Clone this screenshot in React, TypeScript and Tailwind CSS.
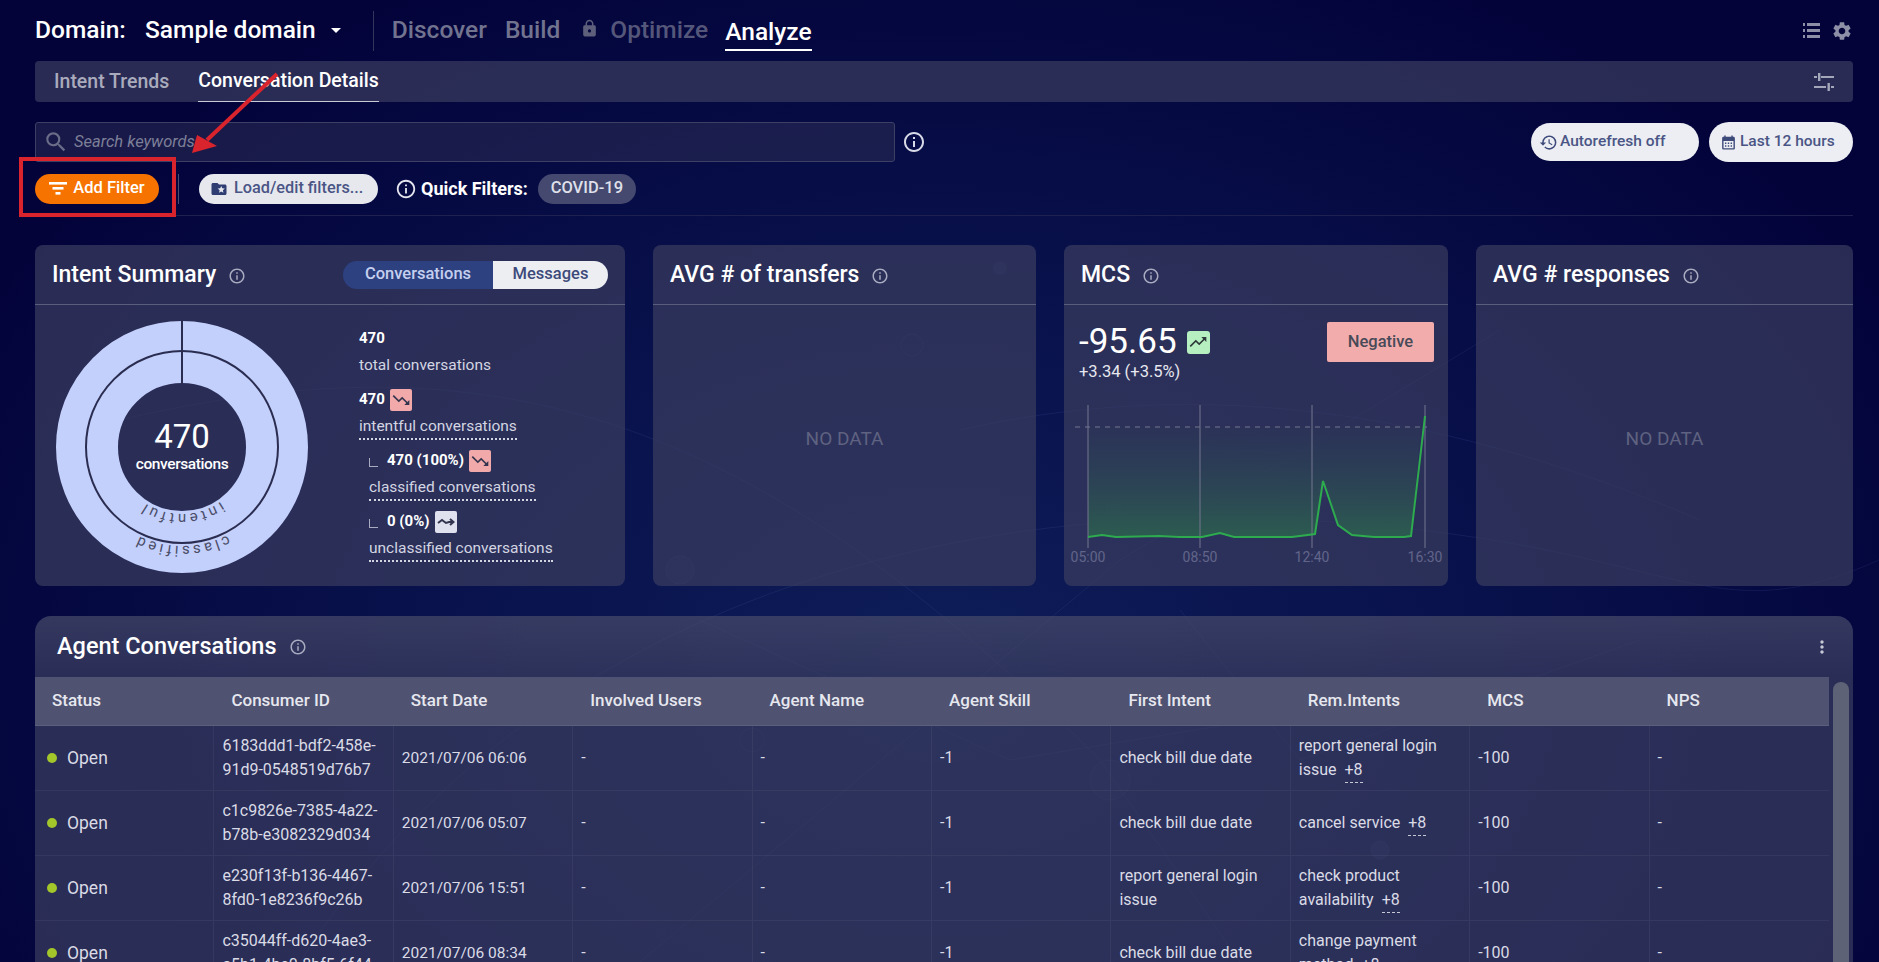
import React from 'react';
import {
  MdCalendarMonth,
  MdFolderSpecial,
  MdHistory,
  MdInfoOutline,
  MdLock,
  MdMoreVert,
  MdSearch,
  MdSettings,
  MdTrendingDown,
  MdTrendingUp,
} from 'react-icons/md';

const rows = [
  { id: ['6183ddd1-bdf2-458e-', '91d9-0548519d76b7'], date: '2021/07/06 06:06', first: ['check bill due date'], rem: ['report general login', 'issue'] },
  { id: ['c1c9826e-7385-4a22-', 'b78b-e3082329d034'], date: '2021/07/06 05:07', first: ['check bill due date'], rem: ['cancel service'] },
  { id: ['e230f13f-b136-4467-', '8fd0-1e8236f9c26b'], date: '2021/07/06 15:51', first: ['report general login', 'issue'], rem: ['check product', 'availability'] },
  { id: ['c35044ff-d620-4ae3-', 'a5b1-4bc0-8bf5-6f44'], date: '2021/07/06 08:34', first: ['check bill due date'], rem: ['change payment', 'method'] },
];

const columns = ['Status', 'Consumer ID', 'Start Date', 'Involved Users', 'Agent Name', 'Agent Skill', 'First Intent', 'Rem.Intents', 'MCS', 'NPS'];

const linePoints = '19,137 33,135 47,137 90,136 110,137 133,137 151,133 165,137 223,137 246,134 254,81 269,125 283,135 305,137 335,137 342,136 356,16';
const areaPoints = `19,27 ${linePoints.replace(' 356,16', ' 352,27')}`;

const Info: React.FC = () => <MdInfoOutline className="text-[#a9abc0] text-[18px]" />;

const CardHeader: React.FC<{ title: string; children?: React.ReactNode }> = ({ title, children }) => (
  <div className="h-[60px] flex items-center border-b border-[#5a5d7c] pl-[17px] pr-[17px] pt-[2px] shrink-0">
    <span className="text-white text-[23px] font-medium">{title}</span>
    <span className="ml-[12px]"><Info /></span>
    {children}
  </div>
);

const Badge: React.FC<{ tone: 'down' | 'flat' }> = ({ tone }) => (
  <span className={`w-[22px] h-[22px] rounded-[2px] flex items-center justify-center ${tone === 'down' ? 'bg-[#f2a9a9]' : 'bg-[#dfe1ee]'}`}>
    {tone === 'down' ? (
      <MdTrendingDown className="text-[#33354f] text-[20px]" />
    ) : (
      <svg width="18" height="12" viewBox="0 0 18 12" fill="none" stroke="#33354f" strokeWidth="2">
        <path d="M1 7 L5 4 L9 7 L12 6 H16" />
        <path d="M13 3 L16.5 6 L13 9" />
      </svg>
    )}
  </span>
);

const Stat: React.FC<{ value: string; label: string; tone?: 'down' | 'flat'; dashed?: boolean; nested?: boolean }> = ({ value, label, tone, dashed, nested }) => (
  <div className={`h-[61px] ${nested ? 'ml-[10px]' : ''}`}>
    <div className="h-[27px] flex items-center gap-[5px] text-white text-[15px] font-bold">
      {nested && <span className="w-[9px] h-[9px] mr-[4px] mt-[3px] border-l border-b border-[#a9abc0]" />}
      <span>{value}</span>
      {tone && <Badge tone={tone} />}
    </div>
    <div className="h-[27px] flex items-center text-[#d3d5e2] text-[15.5px]">
      <span className={dashed ? 'border-b-2 border-dotted border-[#d3d5e2] h-[27px] leading-[25px] pt-[1px]' : ''}>{label}</span>
    </div>
  </div>
);

const Donut: React.FC = () => (
  <svg width="254" height="254" viewBox="0 0 254 254" className="shrink-0">
    <defs>
      <path id="ringInner" d="M 127 60 A 67 67 0 1 1 126.99 60" />
      <path id="ringOuter" d="M 127 28 A 99 99 0 1 1 126.99 28" />
    </defs>
    <circle cx="127" cy="127" r="95" fill="none" stroke="#c3d0fb" strokeWidth="62" />
    <circle cx="127" cy="127" r="96" fill="none" stroke="#2a2c50" strokeWidth="2" />
    <line x1="127" y1="0" x2="127" y2="63" stroke="#2a2c50" strokeWidth="2" />
    <text className="fill-[#4b4d68] text-[15px]" letterSpacing="3" textAnchor="middle">
      <textPath href="#ringInner" startOffset="50%">intentful</textPath>
    </text>
    <text className="fill-[#4b4d68] text-[15px]" letterSpacing="3" textAnchor="middle">
      <textPath href="#ringOuter" startOffset="50%">classified</textPath>
    </text>
    <text x="127" y="128" textAnchor="middle" className="fill-white text-[33px]">470</text>
    <text x="127" y="149" textAnchor="middle" className="fill-white text-[15.5px] font-medium" letterSpacing="-0.4">conversations</text>
  </svg>
);

const Backdrop: React.FC = () => (
  <svg className="absolute inset-0 pointer-events-none" width="1879" height="962" viewBox="0 0 1879 962" fill="none" stroke="#5f7fc4" strokeOpacity="0.12">
    <path d="M300 962 C 520 620 920 500 1300 520 S 1700 640 1879 560" />
    <path d="M120 420 C 500 330 760 420 1100 760 L 1240 962" />
    <path d="M640 962 L 1120 560 L 1500 330" />
    <path d="M960 430 C 1180 380 1420 400 1700 520" />
    <path d="M1180 610 L 1300 760 L 1640 640" />
    <path d="M700 620 L 1010 760 L 1380 700" />
    <circle cx="912" cy="345" r="11" />
    <circle cx="752" cy="740" r="12" />
    <circle cx="1110" cy="780" r="20" fill="#5f7fc4" fillOpacity="0.04" />
    <circle cx="680" cy="570" r="14" fill="#5f7fc4" fillOpacity="0.05" />
    <circle cx="1000" cy="268" r="6" fill="#5f7fc4" fillOpacity="0.12" />
    <circle cx="1113" cy="510" r="8" fill="#5f7fc4" fillOpacity="0.12" />
    <circle cx="1325" cy="490" r="7" fill="#5f7fc4" fillOpacity="0.1" />
    <circle cx="1380" cy="850" r="9" fill="#5f7fc4" fillOpacity="0.1" />
  </svg>
);

const Annotations: React.FC = () => (
  <>
    <div className="absolute left-[19px] top-[157px] w-[157px] h-[60px] border-[4px] border-[#d9242e]" />
    <svg className="absolute left-[180px] top-[60px]" width="110" height="100" viewBox="0 0 110 100" fill="none">
      <line x1="97" y1="14" x2="27" y2="80" stroke="#d9242e" strokeWidth="4" />
      <polygon points="12,93 17,75 37,86" fill="#d9242e" />
    </svg>
  </>
);

const App: React.FC = () => {
  return (
    <div className="relative w-[1879px] h-[962px] overflow-hidden font-[Roboto,sans-serif] bg-[radial-gradient(ellipse_at_50%_70%,#0e1d58_0%,#08104a_45%,#03033a_82%)]">
      <Backdrop />
      <div className="relative pl-[35px] pr-[26px]">
        {/* top nav */}
        <div className="h-[61px] flex items-center text-[24.5px] font-medium">
          <span className="text-white w-[110px] shrink-0">Domain:</span>
          <span className="text-white">Sample domain</span>
          <span className="ml-[15px] w-0 h-0 border-l-[5px] border-r-[5px] border-t-[5px] border-l-transparent border-r-transparent border-t-white" />
          <span className="ml-[32px] w-px h-[40px] bg-[#33365c]" />
          <span className="ml-[18px] text-[#71738f]">Discover</span>
          <span className="ml-[18px] text-[#71738f]">Build</span>
          <MdLock className="ml-[20px] mb-[4px] text-[#5d5f7b] text-[19px]" />
          <span className="ml-[11px] text-[#55577a]">Optimize</span>
          <span className="ml-[17px] text-white h-[36px] leading-[34px] mt-[4px] border-b-2 border-white">Analyze</span>
          <div className="ml-auto flex items-center gap-[11px] text-[#8d8fa6]">
            <svg width="18" height="17" viewBox="0 0 18 17" fill="currentColor">
              <rect x="5" y="1" width="13" height="3" />
              <rect x="5" y="7" width="13" height="3" />
              <rect x="5" y="13" width="13" height="3" />
              <rect x="1" y="1" width="2" height="3" />
              <rect x="1" y="7" width="2" height="3" />
              <rect x="1" y="13" width="2" height="3" />
            </svg>
            <MdSettings className="text-[22px]" />
          </div>
        </div>

        {/* sub tabs */}
        <div className="h-[41px] bg-[#3a3d60]/70 rounded-[4px] flex items-stretch pl-[19px] pr-[19px] text-[19.5px] font-medium">
          <span className="flex items-center text-[#a9abbd]">Intent Trends</span>
          <span className="ml-[29px] flex items-center text-white border-b border-[#c9cad6]">Conversation Details</span>
          <svg className="ml-auto self-center text-[#a4a6ba]" width="20" height="18" viewBox="0 0 20 18" fill="currentColor">
            <rect x="7" y="3" width="13" height="2" />
            <rect x="0" y="3" width="3" height="2" />
            <rect x="4" y="0" width="2.4" height="8" />
            <rect x="0" y="13" width="12" height="2" />
            <rect x="17" y="13" width="3" height="2" />
            <rect x="13.5" y="10" width="2.4" height="8" />
          </svg>
        </div>

        {/* search row */}
        <div className="mt-[20px] h-[40px] flex items-center">
          <div className="w-[860px] h-[40px] bg-[#2e3055]/50 border border-[#3d3f64] rounded-[3px] flex items-center pl-[7px]">
            <MdSearch className="text-[#6a6c88] text-[26px]" />
            <span className="ml-[5px] italic text-[#7d7f98] text-[16.5px]">Search keywords</span>
          </div>
          <MdInfoOutline className="ml-[7px] text-[#d9dbe8] text-[24px]" />
          <button className="ml-auto w-[168px] h-[38px] rounded-full bg-[#eceef3] flex items-center pl-[8px] gap-[2px] text-[#4a5585] text-[15.5px] font-medium">
            <MdHistory className="text-[19px] text-[#3d4a7a]" />
            Autorefresh off
          </button>
          <button className="ml-[10px] w-[144px] h-[40px] rounded-full bg-[#eceef3] flex items-center pl-[11px] gap-[3px] text-[#4a5585] text-[15.5px] font-medium">
            <MdCalendarMonth className="text-[17px] text-[#3d4a7a]" />
            Last 12 hours
          </button>
        </div>

        {/* filter row */}
        <div className="mt-[11px] h-[31px] flex items-center">
          <button className="w-[124px] h-[30px] rounded-full bg-[#f67300] flex items-center justify-center gap-[6px] text-white text-[16.5px] font-medium">
            <svg width="18" height="13" viewBox="0 0 18 13" fill="currentColor">
              <rect x="0" y="0" width="18" height="2.6" />
              <rect x="3.5" y="5" width="11" height="2.6" />
              <rect x="6.5" y="10" width="5" height="2.6" />
            </svg>
            Add Filter
          </button>
          <span className="ml-[19px] w-px h-[30px] bg-[#4a4c70]" />
          <button className="ml-[20px] w-[179px] h-[30px] rounded-full bg-[#e6e8ee] flex items-center pl-[11px] gap-[6px] text-[#4a5585] text-[16.3px] font-medium whitespace-nowrap">
            <MdFolderSpecial className="text-[18px] text-[#2f3d73] shrink-0" />
            Load/edit filters...
          </button>
          <MdInfoOutline className="ml-[17px] text-[#e4e5ee] text-[22px]" />
          <span className="ml-[4px] text-white text-[18px] font-bold">Quick Filters:</span>
          <span className="ml-[10px] w-[98px] h-[30px] rounded-full bg-[#45496f] flex items-center justify-center text-[#dfe0ea] text-[16.5px] font-medium">COVID-19</span>
        </div>

        <div className="mt-[11px] h-px bg-[#1e2050]" />

        {/* summary cards */}
        <div className="mt-[29px] flex h-[341px] gap-[28px]">
          <div className="w-[590px] flex flex-col rounded-[8px] bg-[#3a3d60]/70">
            <CardHeader title="Intent Summary">
              <div className="ml-auto mr-0 -mt-[2px] flex h-[28px] rounded-full overflow-hidden text-[16.5px] font-medium">
                <span className="w-[150px] bg-[#2d4180] text-[#c5cfef] flex items-center justify-center">Conversations</span>
                <span className="w-[115px] bg-[#eceef2] text-[#3d4a7a] flex items-center justify-center">Messages</span>
              </div>
            </CardHeader>
            <div className="flex items-start pl-[20px]">
              <div className="mt-[15px]"><Donut /></div>
              <div className="mt-[20px] ml-[50px]">
                <Stat value="470" label="total conversations" />
                <Stat value="470" label="intentful conversations" tone="down" dashed />
                <Stat value="470 (100%)" label="classified conversations" tone="down" dashed nested />
                <Stat value="0 (0%)" label="unclassified conversations" tone="flat" dashed nested />
              </div>
            </div>
          </div>

          <div className="w-[383px] flex flex-col rounded-[8px] bg-[#3a3d60]/70">
            <CardHeader title="AVG # of transfers" />
            <div className="flex-1 flex items-center justify-center pb-[13px] text-[#5f6280] text-[19px]">NO DATA</div>
          </div>

          <div className="w-[384px] flex flex-col rounded-[8px] bg-[#3a3d60]/70">
            <CardHeader title="MCS" />
            <div className="pl-[15px] pr-[14px] pt-[17px]">
              <div className="h-[40px] flex items-center">
                <span className="text-white text-[35px]">-95.65</span>
                <span className="ml-[10px] w-[23px] h-[23px] rounded-[3px] bg-[#b6efc0] flex items-center justify-center">
                  <MdTrendingUp className="text-[#2c3a3a] text-[20px]" />
                </span>
                <span className="ml-auto w-[107px] h-[40px] rounded-[2px] bg-[#f2acac] flex items-center justify-center text-[#484a58] text-[16.5px] font-medium">Negative</span>
              </div>
              <div className="h-[20px] flex items-center text-[#e6e7ef] text-[16.5px]">+3.34 (+3.5%)</div>
              <svg className="-ml-[10px] mt-[18px] block" width="380" height="175" viewBox="0 0 380 175" fill="none">
                <defs>
                  <linearGradient id="mcsArea" x1="0" y1="0" x2="0" y2="1">
                    <stop offset="0" stopColor="#2b3556" stopOpacity="0.5" />
                    <stop offset="1" stopColor="#2c5c50" />
                  </linearGradient>
                </defs>
                <polygon points={areaPoints} fill="url(#mcsArea)" />
                {[19, 131, 243, 356].map((x) => (
                  <line key={x} x1={x} y1="5" x2={x} y2="148" stroke="#74778f" strokeWidth="1" />
                ))}
                <line x1="6" y1="27" x2="358" y2="27" stroke="#74778f" strokeDasharray="5 5" />
                <polyline points={linePoints} stroke="#2dab4e" strokeWidth="2" />
                {[[19, '05:00'], [131, '08:50'], [243, '12:40'], [356, '16:30']].map(([x, label]) => (
                  <text key={label} x={x} y="162" textAnchor="middle" className="fill-[#62658a] text-[14px]">{label}</text>
                ))}
              </svg>
            </div>
          </div>

          <div className="flex-1 flex flex-col rounded-[8px] bg-[#3a3d60]/70">
            <CardHeader title="AVG # responses" />
            <div className="flex-1 flex items-center justify-center pb-[13px] text-[#5f6280] text-[19px]">NO DATA</div>
          </div>
        </div>

        {/* agent conversations */}
        <div className="mt-[30px] h-[400px] rounded-t-[16px] bg-[#3a3d60]/70">
          <div className="h-[61px] flex items-center pl-[22px] pr-[21px] bg-gradient-to-b from-white/5 to-transparent rounded-t-[16px]">
            <span className="text-white text-[23.5px] font-medium">Agent Conversations</span>
            <span className="ml-[12px]"><Info /></span>
            <MdMoreVert className="ml-auto text-[#c6c8d6] text-[20px]" />
          </div>
          <div className="flex">
            <div className="w-[1794px]">
              <div className="h-[49px] grid grid-cols-10 bg-[#4f5270] border-b border-[#5c5f7c]">
                {columns.map((c) => (
                  <div key={c} className="flex items-center pl-[17px] text-[#e6e7ef] text-[17px] font-medium">{c}</div>
                ))}
              </div>
              {rows.map((r) => (
                <div key={r.id[0]} className="h-[65px] grid grid-cols-10 border-b border-white/5 text-[#dadbe6] text-[16px] leading-[24px]">
                  <div className="flex items-center pl-[12px] border-r border-white/5">
                    <span className="w-[10px] h-[10px] rounded-full bg-[#a3c62a]" />
                    <span className="ml-[10px] text-[17.5px]">Open</span>
                  </div>
                  <div className="flex flex-col justify-center pl-[8px] border-r border-white/5">
                    <div>{r.id[0]}</div>
                    <div>{r.id[1]}</div>
                  </div>
                  <div className="flex items-center pl-[8px] border-r border-white/5 text-[15.5px]">{r.date}</div>
                  <div className="flex items-center pl-[8px] border-r border-white/5">-</div>
                  <div className="flex items-center pl-[8px] border-r border-white/5">-</div>
                  <div className="flex items-center pl-[8px] border-r border-white/5">-1</div>
                  <div className="flex flex-col justify-center pl-[8px] border-r border-white/5">
                    {r.first.map((t) => <div key={t}>{t}</div>)}
                  </div>
                  <div className="flex flex-col justify-center pl-[8px] border-r border-white/5">
                    {r.rem.map((t, i) => (
                      <div key={t}>
                        {t}
                        {i === r.rem.length - 1 && <span className="ml-[8px] border-b border-dashed border-[#c6c8d6] pb-[3px]">+8</span>}
                      </div>
                    ))}
                  </div>
                  <div className="flex items-center pl-[8px] border-r border-white/5">-100</div>
                  <div className="flex items-center pl-[8px]">-</div>
                </div>
              ))}
            </div>
            <div className="flex-1 pl-[4px] pr-[4px] pt-[5px]">
              <div className="w-[16px] h-[400px] rounded-t-[8px] bg-[#5e6276]" />
            </div>
          </div>
        </div>
      </div>
      <Annotations />
    </div>
  );
};

export default App;
